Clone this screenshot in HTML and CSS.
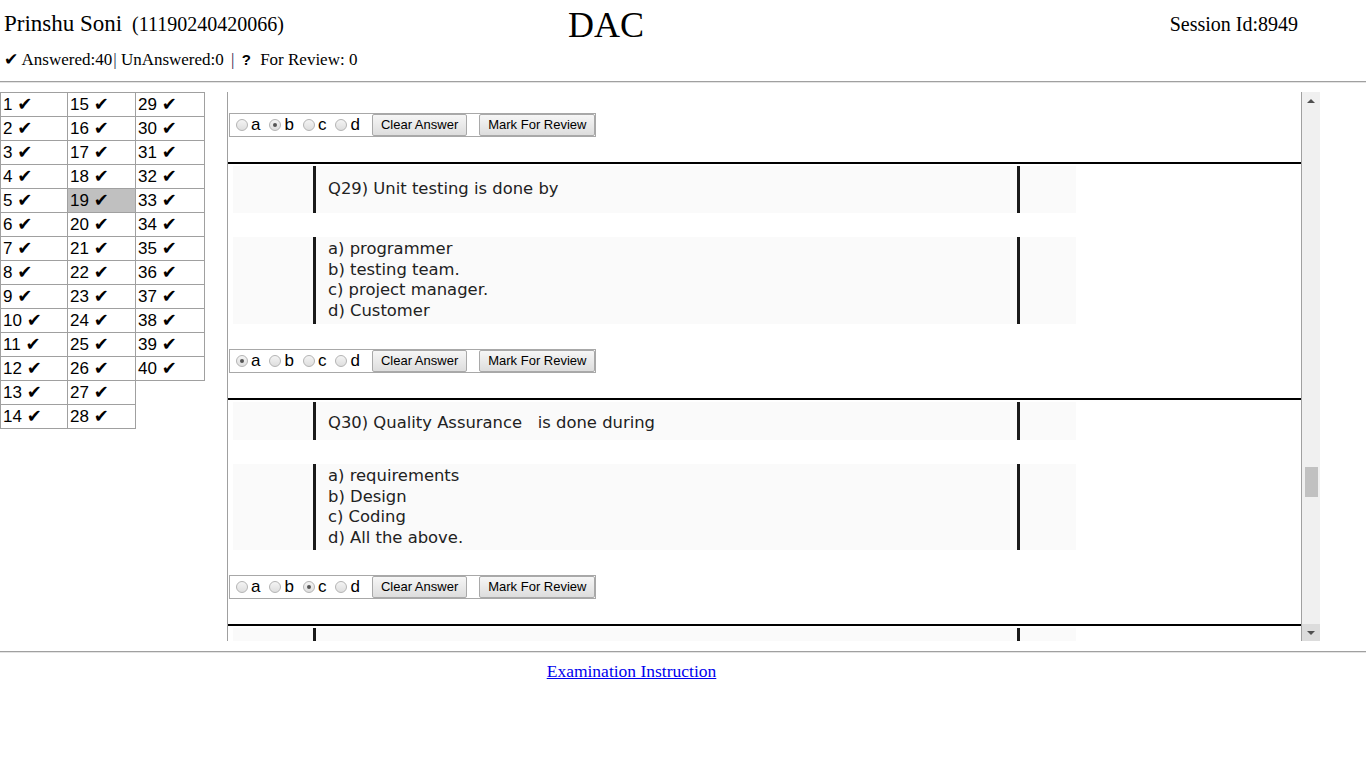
FILE: index.html
```html
<!DOCTYPE html>
<html lang="en">
<head>
<meta charset="utf-8">
<title>DAC Examination</title>
<link rel="stylesheet" href="styles.css">
</head>
<body>
<header class="top">
  <div class="title-row">
    <div class="cand"><span class="name">Prinshu Soni</span> <span class="roll">(11190240420066)</span></div>
    <div class="exam">DAC</div>
    <div class="session">Session Id:8949</div>
  </div>
  <div class="stats">
    <span class="tick">✔</span> Answered:40<span class="sep">|</span> UnAnswered:0 <span class="sep sep2">|</span> <span class="qm">?</span> For Review: 0
  </div>
</header>
<hr class="rule">
<main class="body-row">
  <table class="qnav">
    <tr><td>1 <b>✔</b></td><td>15 <b>✔</b></td><td>29 <b>✔</b></td></tr>
    <tr><td>2 <b>✔</b></td><td>16 <b>✔</b></td><td>30 <b>✔</b></td></tr>
    <tr><td>3 <b>✔</b></td><td>17 <b>✔</b></td><td>31 <b>✔</b></td></tr>
    <tr><td>4 <b>✔</b></td><td>18 <b>✔</b></td><td>32 <b>✔</b></td></tr>
    <tr><td>5 <b>✔</b></td><td class="cur">19 <b>✔</b></td><td>33 <b>✔</b></td></tr>
    <tr><td>6 <b>✔</b></td><td>20 <b>✔</b></td><td>34 <b>✔</b></td></tr>
    <tr><td>7 <b>✔</b></td><td>21 <b>✔</b></td><td>35 <b>✔</b></td></tr>
    <tr><td>8 <b>✔</b></td><td>22 <b>✔</b></td><td>36 <b>✔</b></td></tr>
    <tr><td>9 <b>✔</b></td><td>23 <b>✔</b></td><td>37 <b>✔</b></td></tr>
    <tr><td>10 <b>✔</b></td><td>24 <b>✔</b></td><td>38 <b>✔</b></td></tr>
    <tr><td>11 <b>✔</b></td><td>25 <b>✔</b></td><td>39 <b>✔</b></td></tr>
    <tr><td>12 <b>✔</b></td><td>26 <b>✔</b></td><td>40 <b>✔</b></td></tr>
    <tr><td>13 <b>✔</b></td><td>27 <b>✔</b></td></tr>
    <tr><td>14 <b>✔</b></td><td>28 <b>✔</b></td></tr>
  </table>

  <section class="qpane">
    <div class="qscroll">
      <div class="answer-row first">
        <label><input type="radio" name="q28"> a</label>
        <label><input type="radio" name="q28" checked> b</label>
        <label><input type="radio" name="q28"> c</label>
        <label><input type="radio" name="q28"> d</label>
        <button class="btn">Clear Answer</button>
        <button class="btn">Mark For Review</button>
      </div>

      <div class="qblock">
        <div class="qimg qtext q29"><div class="qin">Q29) Unit testing is done by</div></div>
        <div class="qimg qopts"><div class="qin">a) programmer<br>b) testing team.<br>c) project manager.<br>d) Customer</div></div>
        <div class="answer-row">
          <label><input type="radio" name="q29" checked> a</label>
          <label><input type="radio" name="q29"> b</label>
          <label><input type="radio" name="q29"> c</label>
          <label><input type="radio" name="q29"> d</label>
          <button class="btn">Clear Answer</button>
          <button class="btn">Mark For Review</button>
        </div>
      </div>

      <div class="qblock">
        <div class="qimg qtext q30"><div class="qin">Q30) Quality Assurance &nbsp; is done during</div></div>
        <div class="qimg qopts q30o"><div class="qin">a) requirements<br>b) Design<br>c) Coding<br>d) All the above.</div></div>
        <div class="answer-row">
          <label><input type="radio" name="q30"> a</label>
          <label><input type="radio" name="q30"> b</label>
          <label><input type="radio" name="q30" checked> c</label>
          <label><input type="radio" name="q30"> d</label>
          <button class="btn">Clear Answer</button>
          <button class="btn">Mark For Review</button>
        </div>
      </div>

      <div class="qblock">
        <div class="qimg qtext"><div class="qin"></div></div>
      </div>
    </div>
    <div class="sbar">
      <div class="sbtn up"><span class="tri-up"></span></div>
      <div class="strack"><div class="sthumb"></div></div>
      <div class="sbtn down"><span class="tri-down"></span></div>
    </div>
  </section>
</main>
<hr class="rule foot-rule">
<footer class="foot"><a href="#">Examination Instruction</a></footer>
</body>
</html>
```

FILE: styles.css
```css
html, body {
  margin: 0;
  padding: 0;
  background: #fff;
  color: #000;
  font-family: "Liberation Serif", "DejaVu Serif", serif;
}

.title-row {
  display: flex;
  height: 47px;
}
.cand {
  width: 564px;
  padding: 11px 0 0 4px;
  font-size: 23px;
  line-height: 26px;
  white-space: nowrap;
}
.roll {
  font-size: 20px;
  margin-left: 4px;
}
.exam {
  font-size: 36px;
  line-height: 44px;
  padding-top: 3px;
}
.session {
  margin-left: auto;
  padding: 11px 68px 0 0;
  font-size: 20px;
  line-height: 26px;
}

.stats {
  padding-left: 4px;
  font-size: 17px;
  line-height: 24px;
  white-space: nowrap;
}
.tick {
  font-family: "DejaVu Sans", sans-serif;
  font-size: 17px;
}
.sep { margin-left: 1px; color: #1a1a4a; }
.sep2 { margin-left: 3px; }
.qm {
  font-family: "Liberation Sans", sans-serif;
  font-weight: 900;
  font-size: 15px;
  margin: 0 5px 0 3px;
}

.rule {
  margin: 9px 0 0;
  height: 0;
  border: 0;
  border-top: 1px solid #a0a0a0;
  border-bottom: 1px solid #e4e4e4;
}

.body-row {
  display: flex;
  align-items: flex-start;
  gap: 22px;
  margin-top: 9px;
}

/* left navigation grid */
.qnav {
  border-collapse: collapse;
  font-family: "Liberation Sans", Arial, sans-serif;
  font-size: 17px;
  flex: none;
}
.qnav td {
  border: 1px solid #a0a0a0;
  height: 23px;
  padding: 0 0 0 2px;
  line-height: 22px;
  vertical-align: middle;
  white-space: nowrap;
}
.qnav tr td:nth-child(1) { width: 64px; }
.qnav tr td:nth-child(2) { width: 65px; }
.qnav tr td:nth-child(3) { width: 66px; }
.qnav td b {
  font-family: "DejaVu Sans", sans-serif;
  font-weight: normal;
  font-size: 18px;
  line-height: 18px;
}
.qnav td.cur { background: #c0c0c0; }

/* question pane */
.qpane {
  display: flex;
  width: 1092px;
  height: 549px;
  border-left: 1px solid #a0a0a0;
  flex: none;
}
.qscroll {
  flex: 1;
  overflow: hidden;
  border-right: 1px solid #a0a0a0;
}

.answer-row {
  display: inline-flex;
  align-items: center;
  margin: 25px 0 25px 1px;
  height: 22px;
  border: 1px solid #a8a8a8;
  font-family: "Liberation Sans", Arial, sans-serif;
  font-size: 17px;
}
.answer-row.first { margin-top: 21px; }
.answer-row label {
  display: inline-flex;
  align-items: center;
  margin-left: 6px;
  line-height: 20px;
}
.answer-row label + label { margin-left: 9px; }
.answer-row input {
  appearance: none;
  -webkit-appearance: none;
  width: 12px;
  height: 12px;
  margin: 0 3px 0 0;
  border: 1px solid #b4b4b4;
  border-radius: 50%;
  background: linear-gradient(#f4f4f4, #dedede);
  position: relative;
  flex: none;
}
.answer-row input:checked::after {
  content: "";
  position: absolute;
  left: 3px;
  top: 3px;
  width: 4px;
  height: 4px;
  border-radius: 50%;
  background: #555;
}
.btn {
  height: 22px;
  margin-left: 12px;
  padding: 0 8px;
  border: 1px solid #a9a9a9;
  border-radius: 2px;
  background: linear-gradient(#f6f6f6, #dddddd);
  font-family: "Liberation Sans", Arial, sans-serif;
  font-size: 13px;
  color: #000;
  line-height: 20px;
}

.qblock {
  border-top: 2px solid #000;
  padding-top: 2px;
}
.qimg {
  width: 843px;
  margin-left: 5px;
  background: #fafafa;
}
.qin {
  margin-left: 80px;
  width: 689px;
  border-left: 3px solid #1a1a1a;
  border-right: 3px solid #1a1a1a;
  padding-left: 12px;
  font-family: "DejaVu Sans", Verdana, sans-serif;
  font-size: 16.4px;
  color: #222;
}
.qtext .qin {
  height: 47px;
  line-height: 46px;
}
.q30 .qin {
  height: 38px;
  line-height: 42px;
}
.qopts { margin-top: 24px; }
.qopts .qin {
  height: 85px;
  padding-top: 2px;
  line-height: 20.5px;
}
.q30o .qin { height: 84px; }

/* fake scrollbar */
.sbar {
  width: 18px;
  flex: none;
  display: flex;
  flex-direction: column;
  background: #f0f0f0;
}
.sbtn {
  height: 17px;
  display: flex;
  align-items: center;
  justify-content: center;
}
.sbtn.down { background: #dcdcdc; }
.tri-up {
  width: 0; height: 0;
  border-left: 4px solid transparent;
  border-right: 4px solid transparent;
  border-bottom: 4px solid #505050;
}
.tri-down {
  width: 0; height: 0;
  border-left: 4px solid transparent;
  border-right: 4px solid transparent;
  border-top: 4px solid #505050;
}
.strack {
  flex: 1;
  padding: 358px 2px 0 3px;
}
.sthumb {
  height: 30px;
  background: #c1c1c1;
}

.foot-rule { margin-top: 10px; }
.foot {
  padding: 8px 0 0 0;
  width: 1263px;
  text-align: center;
  font-size: 17.5px;
}
.foot a { color: #0000ee; }
```
